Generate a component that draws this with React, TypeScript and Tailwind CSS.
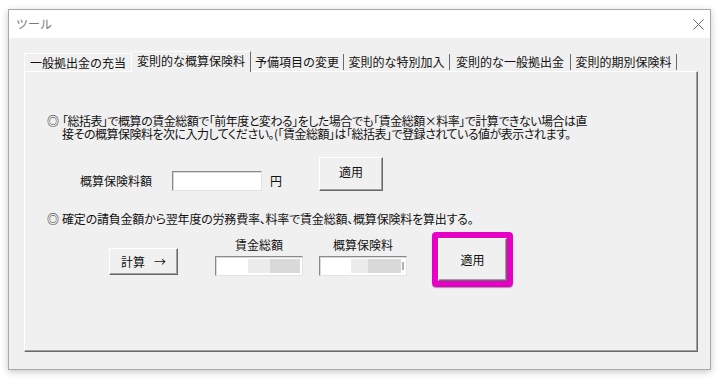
const font = "font-['Meiryo_UI','Noto_Sans_CJK_JP',sans-serif]";

const btn =
  "flex items-center justify-center bg-[#f0f0f0] border border-t-white border-l-white border-r-[#696969] border-b-[#696969] shadow-[inset_-1px_-1px_0_#a0a0a0]";

const field =
  "h-[20px] bg-white border border-t-[#8a8a8a] border-l-[#8a8a8a] border-r-[#e3e3e3] border-b-[#e3e3e3] shadow-[inset_1px_1px_0_#d8d8d8]";

const tabs = [
  { label: "予備項目の変更", w: "w-[93px]" },
  { label: "変則的な特別加入", w: "w-[106px]" },
  { label: "変則的な一般拠出金", w: "w-[121px]" },
  { label: "変則的期別保険料", w: "w-[106px]" },
];

function Blurred({ a, b, tail }: { a: string; b: string; tail?: boolean }) {
  // redacted numbers, shown as grey smudges
  return (
    <div className={`${field} w-[88px] flex items-center justify-end pr-[2px]`}>
      <div className={`h-[14px] ${a} bg-[#ececec]`} />
      <div className={`h-[14px] ${b} bg-[#d9d9d9]`} />
      {tail && <div className="w-[2px] h-[8px] ml-[1px] bg-[#b0b0b0]" />}
    </div>
  );
}

export default function App() {
  return (
    <div className={`w-[719px] h-[382px] bg-white pt-[9px] pl-[8px] text-[12px] text-[#111] ${font}`}>
      <div className="w-[703px] h-[361px] border border-[#a8a8a8] bg-[#f0f0f0] shadow-[0_2px_7px_rgba(0,0,0,0.22)] flex flex-col">
        {/* title bar */}
        <div className="h-[28px] bg-white flex items-center justify-between pl-[7px] pr-[6px]">
          <span className="text-[#7a7a7a] text-[12px]">ツール</span>
          <svg width="11" height="11" viewBox="0 0 11 11">
            <path d="M0.5 0.5 L10.5 10.5 M10.5 0.5 L0.5 10.5" stroke="#6b6b6b" strokeWidth="1" fill="none" />
          </svg>
        </div>

        <div className="flex-1 pl-[15px] pr-[12px] pt-[13px]">
          {/* tabs */}
          <div className="flex items-end h-[20px] leading-none">
            <div className="w-[107px] h-[18px] border-l border-t border-white flex items-center justify-center pt-[1px]">
              一般拠出金の充当
            </div>
            <div className="w-[120px] h-[21px] -mb-px relative z-10 bg-[#f0f0f0] border-l border-t border-white border-r border-r-[#696969] flex items-start justify-center pt-[3px]">
              変則的な概算保険料
            </div>
            {tabs.map((t) => (
              <div
                key={t.label}
                className={`${t.w} h-[16px] mb-[1px] border-r border-[#696969] flex items-center justify-center`}
              >
                {t.label}
              </div>
            ))}
          </div>

          {/* panel */}
          <div className="h-[281px] border border-t-white border-l-white border-r-[#696969] border-b-[#696969] shadow-[inset_-1px_-1px_0_#a0a0a0] pt-[42px]">
            <div className="flex leading-[13px] pl-[22px]">
              <span className="w-[15px] shrink-0">◎</span>
              <p className="whitespace-nowrap tracking-[-0.5px] [font-feature-settings:'palt']">
                「総括表」で概算の賃金総額で「前年度と変わる」をした場合でも「賃金総額×料率」で計算できない場合は直
                <br />
                接その概算保険料を次に入力してください。(「賃金総額」は「総括表」で登録されている値が表示されます。
              </p>
            </div>

            <div className="flex items-end mt-[17px] pl-[55px]">
              <span className="w-[92px] leading-[20px]">概算保険料額</span>
              <div className={`${field} w-[90px]`} />
              <span className="ml-[8px] leading-[20px]">円</span>
              <div className={`${btn} ml-[37px] w-[64px] h-[34px] pb-[4px]`}>適用</div>
            </div>

            <div className="flex leading-[12px] pl-[22px] mt-[22px]">
              <span className="w-[15px] shrink-0">◎</span>
              <p className="whitespace-nowrap tracking-[-0.2px] [font-feature-settings:'palt']">
                確定の請負金額から翌年度の労務費率、料率で賃金総額、概算保険料を算出する。
              </p>
            </div>

            <div className="flex items-start mt-[7px] pl-[84px]">
              <div className={`${btn} mt-[16px] w-[69px] h-[27px] gap-[9px]`}>
                <span>計算</span>
                <span>→</span>
              </div>
              <div className="ml-[37px] mt-[5px] w-[88px] flex flex-col items-center">
                <span className="leading-[16px]">賃金総額</span>
                <div className="mt-[3px]">
                  <Blurred a="w-[22px]" b="w-[30px]" />
                </div>
              </div>
              <div className="ml-[16px] mt-[5px] w-[88px] flex flex-col items-center">
                <span className="leading-[16px]">概算保険料</span>
                <div className="mt-[3px]">
                  <Blurred a="w-[17px]" b="w-[33px]" tail />
                </div>
              </div>
              <div className="ml-[25px] w-[81px] h-[55px] border-[6px] border-[#e600c6] rounded-[4px] shadow-[0_1px_1px_rgba(0,0,0,0.35)]">
                <div className={`${btn} w-full h-full`}>適用</div>
              </div>
            </div>
          </div>
        </div>
      </div>
    </div>
  );
}
